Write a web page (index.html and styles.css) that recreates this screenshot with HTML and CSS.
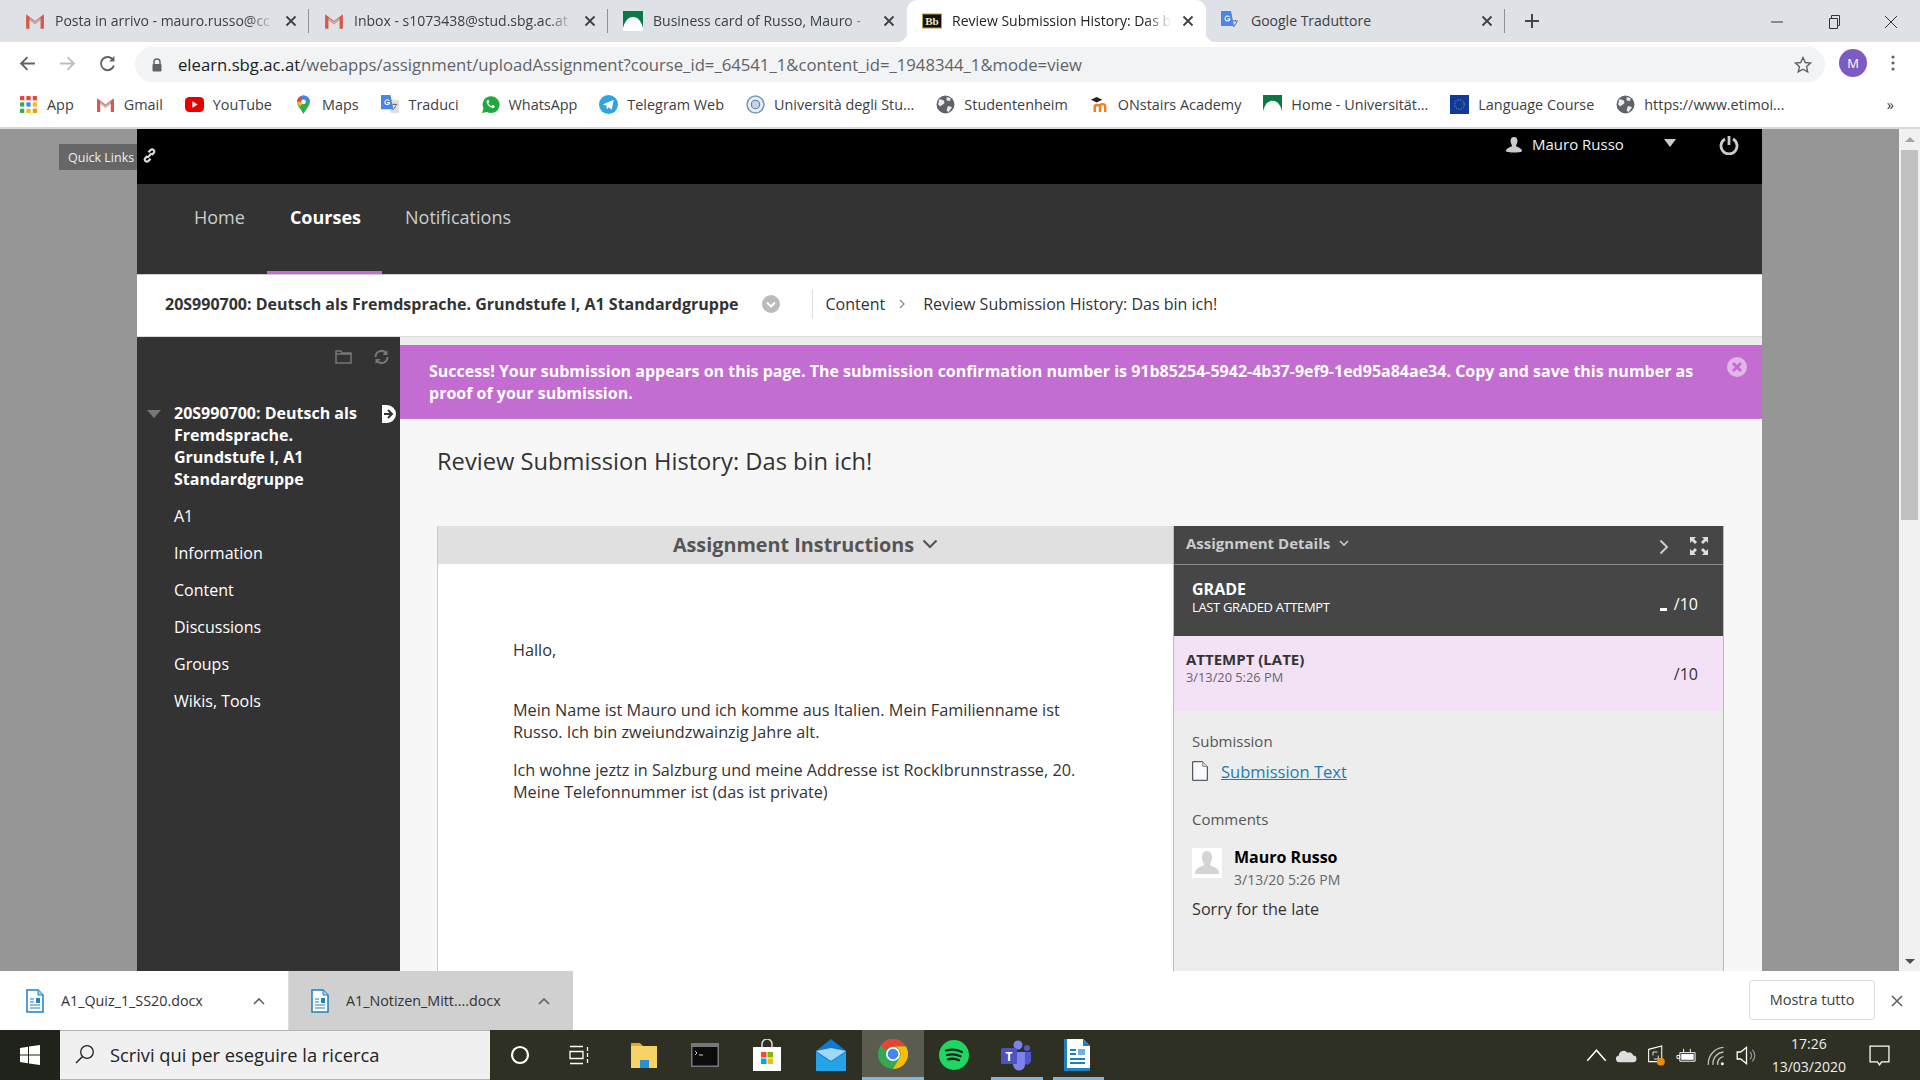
FILE: index.html
```html
<!DOCTYPE html>
<html lang="it">
<head>
<meta charset="utf-8">
<title>Review Submission History</title>
<link rel="stylesheet" href="styles.css">
</head>
<body>
<svg class="defs" width="0" height="0" aria-hidden="true">
  <symbol id="gm" viewBox="0 0 18 18"><path d="M1 16V3l8 6 8-6v13h-3V8l-5 4-5-4v8z" fill="#d8574a"/><path d="M4 8l5 4 5-4V6L9 9.600 4 6z" fill="#bbb5b0"/></symbol>
  <symbol id="uni" viewBox="0 0 20 20"><rect width="20" height="20" fill="#0a7a45"/><path d="M0 20V17C2 9 6 6 10 6s8 3 10 11v3z" fill="#fff"/></symbol>
  <symbol id="gt" viewBox="0 0 20 20"><path d="M9 5h10v14H10z" fill="#dfe1e5"/><path d="M0 0h10l3 15H0z" fill="#4a84ee"/><path d="M8.500 6A2.500 2.500 0 1 0 9 8H6.500" fill="none" stroke="#fff" stroke-width="1.100"/><path d="M12 10h5M14.500 9v1M12.500 16l3.500-5" stroke="#666" stroke-width="1" fill="none"/></symbol>
  <symbol id="globe" viewBox="0 0 18 18"><circle cx="9" cy="9" r="8.500" fill="#5f6368"/><path d="M3 4c3 0 5 1 5 3S5 9 4 11L2 9zM11 11c2-1 4 0 4 1l-3 4-2-1zM10 2l4 1-1 3-3-1z" fill="#e8eaed"/></symbol>
  <symbol id="odt" viewBox="0 0 18 24"><path d="M1 1h11l5 5v17H1z" fill="#fff" stroke="#1c80c4" stroke-width="1.500"/><path d="M12 1v5h5" fill="#aed0e8" stroke="#1c80c4"/><path d="M4 10h4M4 13h4M4 16h10M4 19h10" stroke="#1c80c4" stroke-width="1.200"/><rect x="10" y="9" width="4" height="5" fill="#1c80c4"/></symbol>
  <symbol id="close" viewBox="0 0 12 12"><path d="M1.500 1.500l9 9M10.500 1.500l-9 9" stroke="#3c4043" stroke-width="1.800"/></symbol>
</svg>

<header class="tabstrip">
  <div class="tab">
    <svg class="fav"><use href="#gm"/></svg><span class="tab-title">Posta in arrivo - mauro.russo@cc</span><svg class="tab-x"><use href="#close"/></svg>
  </div>
  <div class="tab sep">
    <svg class="fav"><use href="#gm"/></svg><span class="tab-title">Inbox - s1073438@stud.sbg.ac.at</span><svg class="tab-x"><use href="#close"/></svg>
  </div>
  <div class="tab sep">
    <svg class="fav"><use href="#uni"/></svg><span class="tab-title">Business card of Russo, Mauro -</span><svg class="tab-x"><use href="#close"/></svg>
  </div>
  <div class="tab active">
    <svg class="fav" viewBox="0 0 20 20"><rect x=".500" y="3" width="19" height="14" fill="#111" stroke="#b8993e"/><text x="10" y="14" class="bb">Bb</text></svg><span class="tab-title">Review Submission History: Das b</span><svg class="tab-x"><use href="#close"/></svg>
  </div>
  <div class="tab tab-last">
    <svg class="fav"><use href="#gt"/></svg><span class="tab-title">Google Traduttore</span><svg class="tab-x"><use href="#close"/></svg>
  </div>
  <div class="new-tab">
    <svg width="14" height="14" viewBox="0 0 14 14"><path d="M7 0v14M0 7h14" stroke="#444" stroke-width="2"/></svg>
  </div>
  <div class="win-controls">
    <svg width="14" height="14" viewBox="0 0 14 14"><path d="M1 7h12" stroke="#333"/></svg>
    <svg width="14" height="14" viewBox="0 0 14 14"><path d="M2.500 3.500h8v10h-8zM4.500 3.500v-3h8v10h-2" fill="none" stroke="#333"/></svg>
    <svg width="14" height="14" viewBox="0 0 14 14"><path d="M1 1l12 12M13 1L1 13" stroke="#333"/></svg>
  </div>
</header>

<nav class="toolbar">
  <svg class="tool" viewBox="0 0 16 16"><path d="M15 8H2M8 2 2 8l6 6" fill="none" stroke="#5f6368" stroke-width="1.800"/></svg>
  <svg class="tool" viewBox="0 0 16 16"><path d="M1 8h13M8 2l6 6-6 6" fill="none" stroke="#bcbfc3" stroke-width="1.800"/></svg>
  <svg class="tool" viewBox="0 0 16 16"><path d="M13.500 5A6.200 6.200 0 1 0 14 10" fill="none" stroke="#5f6368" stroke-width="1.800"/><path d="M14.500 1v5h-5z" fill="#5f6368"/></svg>
  <div class="omnibox">
    <svg class="lock" viewBox="0 0 12 14"><path d="M3 6V4a3 3 0 0 1 6 0v2" fill="none" stroke="#5f6368" stroke-width="1.400"/><rect x="1.500" y="6" width="9" height="7.500" rx="1" fill="#5f6368"/></svg>
    <span class="url"><b class="host">elearn.sbg.ac.at</b>/webapps/assignment/uploadAssignment?course_id=_64541_1&amp;content_id=_1948344_1&amp;mode=view</span>
    <svg class="star" viewBox="0 0 18 18"><path d="M9 1.500l2.300 5 5.200.6-3.900 3.500 1.100 5.300L9 13.200l-4.700 2.700 1.100-5.300L1.500 7.100l5.200-.6z" fill="none" stroke="#5f6368" stroke-width="1.400"/></svg>
  </div>
  <div class="avatar">M</div>
  <svg class="kebab" viewBox="0 0 4 16"><circle cx="2" cy="2" r="1.600"/><circle cx="2" cy="8" r="1.600"/><circle cx="2" cy="14" r="1.600"/></svg>
</nav>

<nav class="bookmarks">
  <a class="bm bm-app"><svg class="bm-i" viewBox="0 0 18 18"><g><rect x="1" y="1" width="4" height="4" fill="#ea4335"/><rect x="7" y="1" width="4" height="4" fill="#ea4335"/><rect x="13" y="1" width="4" height="4" fill="#ea4335"/><rect x="1" y="7" width="4" height="4" fill="#34a853"/><rect x="7" y="7" width="4" height="4" fill="#4285f4"/><rect x="13" y="7" width="4" height="4" fill="#fbbc05"/><rect x="1" y="13" width="4" height="4" fill="#34a853"/><rect x="7" y="13" width="4" height="4" fill="#fbbc05"/><rect x="13" y="13" width="4" height="4" fill="#f29900"/></g></svg>App</a>
  <a class="bm"><svg class="bm-i"><use href="#gm"/></svg>Gmail</a>
  <a class="bm"><svg class="bm-i" viewBox="0 0 18 18"><rect y="2" width="18" height="14" rx="4" fill="#e60000"/><path d="M7 6l5 3-5 3z" fill="#fff"/></svg>YouTube</a>
  <a class="bm"><svg class="bm-i" viewBox="0 0 18 18"><path d="M9 18C6 13 3 10 3 6.500a6 6 0 0 1 12 0C15 10 12 13 9 18z" fill="#34a853"/><path d="M3 6.500a6 6 0 0 1 3-5.200l3 5.200z" fill="#ea4335"/><path d="M6 1.300a6 6 0 0 1 9 5.200H9z" fill="#4285f4"/><path d="M3 6.500h6L6 11C4 9 3 8 3 6.500z" fill="#fbbc05"/><circle cx="9" cy="6.500" r="2.200" fill="#fff"/></svg>Maps</a>
  <a class="bm"><svg class="bm-i"><use href="#gt"/></svg>Traduci</a>
  <a class="bm"><svg class="bm-i" viewBox="0 0 18 18"><path d="M1 17l1.300-4.500A8 8 0 1 1 5.500 16z" fill="#1faa3d"/><path d="M6 5c-1 1-1 3 1 5s4 3 5.500 2l.5-1.500-2-1-1 1c-1 0-3-2-3-3l1-1-1-2z" fill="#fff"/></svg>WhatsApp</a>
  <a class="bm"><svg class="bm-i" viewBox="0 0 18 18"><circle cx="9" cy="9" r="9" fill="#2ca5e0"/><path d="M3.500 9 14 4.500 12 14l-3-2.300-1.500 2-.5-3.700z" fill="#fff"/></svg>Telegram Web</a>
  <a class="bm"><svg class="bm-i" viewBox="0 0 18 18"><circle cx="9" cy="9" r="8" fill="#e6edf5" stroke="#7c98bd" stroke-width="1.500"/><circle cx="9" cy="9" r="4" fill="#c5d3e4" stroke="#5b7ba6"/></svg>Università degli Stu...</a>
  <a class="bm"><svg class="bm-i"><use href="#globe"/></svg>Studentenheim</a>
  <a class="bm"><svg class="bm-i" viewBox="0 0 20 18"><path d="M1 4l6-3 6 3-6 3z" fill="#222"/><path d="M5 17V10M10.500 17V10M16 17v-6c0-3-5.500-3-5.500-1M5 11c0-2 5.500-2 5.500 0" fill="none" stroke="#f0801e" stroke-width="2.600"/></svg>ONstairs Academy</a>
  <a class="bm"><svg class="bm-i"><use href="#uni"/></svg>Home - Universität...</a>
  <a class="bm"><svg class="bm-i" viewBox="0 0 20 20"><rect width="20" height="20" fill="#0d3a9c"/><circle cx="10" cy="10" r="5" fill="none" stroke="#d9c52a" stroke-dasharray="1 1.600"/></svg>Language Course</a>
  <a class="bm"><svg class="bm-i"><use href="#globe"/></svg>https://www.etimoi...</a>
  <span class="bm-more">»</span>
</nav>

<main class="page">
  <div class="gutter-left">
    <div class="quick"><span>Quick Links</span><svg class="quick-i" viewBox="0 0 14 14"><path d="M5 7.500 3 9.500a2 2 0 0 0 2.800 2.800L8 10M9 6.500l2-2A2 2 0 0 0 8.200 1.700L6 4M5 9l4-4" fill="none" stroke="#ddd" stroke-width="2"/></svg></div>
  </div>
  <div class="frame">
    <div class="topbar">
      <svg class="tb-user" viewBox="0 0 18 18"><path d="M9 1c2.500 0 3.500 2 3.500 4S11 9 11 10c0 1 6 1.500 6 5 0 2-16 2-16 0 0-3.500 6-4 6-5 0-1-1.500-3-1.500-5S6.500 1 9 1z" fill="#ccc"/></svg>
      <span class="tb-name">Mauro Russo</span>
      <span class="tb-tri"></span>
      <svg class="tb-power" viewBox="0 0 20 20"><path d="M6 4a8 8 0 1 0 8 0" fill="none" stroke="#ccc" stroke-width="2.800"/><path d="M10 1v9" stroke="#ccc" stroke-width="2.800"/></svg>
    </div>
    <div class="mainnav">
      <a class="nav-item">Home</a>
      <a class="nav-item current">Courses</a>
      <a class="nav-item">Notifications</a>
    </div>
    <div class="crumbs">
      <span class="crumb-course">20S990700: Deutsch als Fremdsprache. Grundstufe I, A1 Standardgruppe</span>
      <svg class="crumb-down" viewBox="0 0 18 18"><circle cx="9" cy="9" r="9" fill="#bbb"/><path d="M5 7.500l4 4 4-4" fill="none" stroke="#fff" stroke-width="2"/></svg>
      <span class="crumb-div"></span>
      <span class="crumb-item">Content</span>
      <svg class="crumb-sep" viewBox="0 0 6 10"><path d="M1 1l4 4-4 4" fill="none" stroke="#888" stroke-width="1.200"/></svg>
      <span class="crumb-item">Review Submission History: Das bin ich!</span>
    </div>
    <div class="body-row">
      <aside class="sidebar">
        <div class="side-tools">
          <svg class="side-t" viewBox="0 0 17 16"><path d="M1 14V2h5l1 2h9v10zM1 5h15" fill="none" stroke="#777" stroke-width="1.500"/></svg>
          <svg class="side-t" viewBox="0 0 16 16"><path d="M2 8a6 6 0 0 1 10.500-4M14 8a6 6 0 0 1-10.500 4" fill="none" stroke="#777" stroke-width="2"/><path d="M14 1v5H9zM2 15v-5h5z" fill="#777"/></svg>
        </div>
        <div class="side-course">
          <span class="side-tri"></span>
          <span class="side-title">20S990700: Deutsch als Fremdsprache. Grundstufe I, A1 Standardgruppe</span>
          <svg class="side-go" viewBox="0 0 14 18"><path d="M0 0h5a9 9 0 0 1 0 18H0z" fill="#fff"/><path d="M2 9h7M6 5l4 4-4 4" fill="none" stroke="#333" stroke-width="2"/></svg>
        </div>
        <ul class="side-list">
          <li>A1</li>
          <li>Information</li>
          <li>Content</li>
          <li>Discussions</li>
          <li>Groups</li>
          <li>Wikis, Tools</li>
        </ul>
      </aside>
      <section class="content">
        <div class="strip"></div>
        <div class="banner">
          <p>Success! Your submission appears on this page. The submission confirmation number is 91b85254-5942-4b37-9ef9-1ed95a84ae34. Copy and save this number as proof of your submission.</p>
          <svg class="banner-x" viewBox="0 0 20 20"><circle cx="10" cy="10" r="10" fill="#e3b6ea"/><path d="M6 6l8 8M14 6l-8 8" stroke="#c36dd2" stroke-width="3"/></svg>
        </div>
        <h1 class="page-title">Review Submission History: Das bin ich!</h1>
        <div class="panels">
          <div class="instr">
            <div class="instr-head">Assignment Instructions<svg class="instr-chev" viewBox="0 0 16 10"><path d="M1.500 1.500 8 8l6.500-6.500" fill="none" stroke="#555" stroke-width="2.200"/></svg></div>
            <div class="instr-body">
              <p class="hallo">Hallo,</p>
              <p class="para">Mein Name ist Mauro und ich komme aus Italien. Mein Familienname ist Russo. Ich bin zweiundzwainzig Jahre alt.</p>
              <p class="para">Ich wohne jeztz in Salzburg und meine Addresse ist Rocklbrunnstrasse, 20. Meine Telefonnummer ist (das ist private)</p>
            </div>
          </div>
          <div class="details">
            <div class="det-head">
              <span class="det-title">Assignment Details</span>
              <svg class="det-chev" viewBox="0 0 10 7"><path d="M1 1l4 4 4-4" fill="none" stroke="#ccc" stroke-width="1.600"/></svg>
              <svg class="det-next" viewBox="0 0 10 16"><path d="M1.500 1.500 8 8l-6.500 6.500" fill="none" stroke="#ccc" stroke-width="2"/></svg>
              <svg class="det-exp" viewBox="0 0 20 20"><path d="M1 1h6L5 3l3 3-2 2-3-3-2 2zM19 1v6l-2-2-3 3-2-2 3-3-2-2zM1 19v-6l2 2 3-3 2 2-3 3 2 2zM19 19h-6l2-2-3-3 2-2 3 3 2-2z" fill="#ddd"/></svg>
            </div>
            <div class="grade">
              <div><div class="grade-t">GRADE</div><div class="grade-s">LAST GRADED ATTEMPT</div></div>
              <div class="grade-v"><span class="grade-dash"></span>/10</div>
            </div>
            <div class="attempt">
              <div><div class="att-t">ATTEMPT (LATE)</div><div class="att-d">3/13/20 5:26 PM</div></div>
              <div class="att-v">/10</div>
            </div>
            <div class="det-body">
              <div class="lbl">Submission</div>
              <div class="sub-link">
                <svg class="sub-i" viewBox="0 0 16 20"><path d="M.700.700h10l4.600 4.600v14H.700z" fill="#f8fbfb" stroke="#334"/><path d="M10.700.700v4.600h4.600" fill="#d5e5e5" stroke="#889"/></svg>
                <a class="link">Submission Text</a>
              </div>
              <div class="lbl lbl-c">Comments</div>
              <div class="comment">
                <svg class="cm-av" viewBox="0 0 30 30"><rect width="30" height="30" fill="#fff"/><path d="M15 3c3.500 0 5 3 5 6.500S18 15 18 17c0 1 8 2 9 7v2H3v-2c1-5 9-6 9-7 0-2-2-4-2-7.500S11.500 3 15 3z" fill="#d4d4d4"/></svg>
                <div><div class="cm-name">Mauro Russo</div><div class="cm-date">3/13/20 5:26 PM</div></div>
              </div>
              <div class="cm-text">Sorry for the late</div>
            </div>
          </div>
        </div>
      </section>
    </div>
  </div>
  <div class="gutter-right"></div>
  <div class="scrollbar">
    <span class="sb-up"></span>
    <span class="sb-thumb"></span>
    <span class="sb-down"></span>
  </div>
</main>

<div class="downloads">
  <div class="dl">
    <svg class="dl-i"><use href="#odt"/></svg><span class="dl-name">A1_Quiz_1_SS20.docx</span>
    <svg class="dl-c" viewBox="0 0 12 8"><path d="M1 7l5-5 5 5" fill="none" stroke="#5f6368" stroke-width="1.600"/></svg>
  </div>
  <div class="dl dl-on">
    <svg class="dl-i"><use href="#odt"/></svg><span class="dl-name">A1_Notizen_Mitt....docx</span>
    <svg class="dl-c" viewBox="0 0 12 8"><path d="M1 7l5-5 5 5" fill="none" stroke="#5f6368" stroke-width="1.600"/></svg>
  </div>
  <div class="dl-fill"></div>
  <button class="show-all">Mostra tutto</button>
  <svg class="dl-x" viewBox="0 0 12 12"><path d="M1 1l10 10M11 1 1 11" stroke="#5f6368" stroke-width="1.600"/></svg>
</div>

<footer class="taskbar">
  <div class="start"><svg width="20" height="20" viewBox="0 0 20 20"><path d="M0 3l8-1.200V9.500H0zM9 1.600 20 0v9.500H9zM0 10.500h8v7.700L0 17zM9 10.500h11V20L9 18.400z" fill="#fff"/></svg></div>
  <div class="search">
    <svg class="search-i" viewBox="0 0 20 20"><circle cx="12" cy="8" r="6.300" fill="none" stroke="#222" stroke-width="1.300"/><path d="M7.500 12.500 1 19" stroke="#222" stroke-width="1.500"/></svg>
    <span>Scrivi qui per eseguire la ricerca</span>
  </div>
  <div class="task task-cortana"><svg width="20" height="20" viewBox="0 0 20 20"><circle cx="10" cy="10" r="8" fill="none" stroke="#fff" stroke-width="2.200"/></svg></div>
  <div class="task task-view"><svg width="22" height="20" viewBox="0 0 22 20"><path d="M1 1.500h13M1 18.500h13M1 6.500h13v7H1zM18.500 2v4M18.500 8v4M18.500 14v4" fill="none" stroke="#fff" stroke-width="1.300"/></svg></div>
  <div class="task"><svg width="28" height="26" viewBox="0 0 28 26"><path d="M1 1h9l3 3v3H1z" fill="#e5a823"/><rect x="1" y="4" width="26" height="22" fill="#f7d366"/><path d="M10 26v-8h9v8z" fill="#2b8fd6"/></svg></div>
  <div class="task"><svg width="28" height="24" viewBox="0 0 28 24"><rect width="28" height="24" fill="#777"/><rect x="1.500" y="4" width="25" height="18.500" fill="#0c0c0c"/><path d="M4 8l2 2-2 2M8 12h4" stroke="#ccc" fill="none"/></svg></div>
  <div class="task"><svg width="28" height="32" viewBox="0 0 28 32"><path d="M9 8V5a5 5 0 0 1 10 0v3" fill="none" stroke="#ddd" stroke-width="1.500"/><rect y="8" width="28" height="24" fill="#fff"/><rect x="8" y="13" width="5.500" height="5.500" fill="#f25022"/><rect x="14.500" y="13" width="5.500" height="5.500" fill="#7fba00"/><rect x="8" y="19.500" width="5.500" height="5.500" fill="#00a4ef"/><rect x="14.500" y="19.500" width="5.500" height="5.500" fill="#ffb900"/></svg></div>
  <div class="task task-mail"><svg width="30" height="32" viewBox="0 0 30 32"><path d="M0 12 15 0l15 12v20H0z" fill="#0f78d4"/><path d="M0 12l15 10 15-10-15-3z" fill="#9fd8f7"/><path d="M0 32V13l15 10 15-10v19z" fill="#27a3e8"/></svg></div>
  <div class="task task-on"><svg width="30" height="30" viewBox="0 0 30 30"><circle cx="15" cy="15" r="15" fill="#34a853"/><path d="M15 0a15 15 0 0 1 13 7.500H15a7.500 7.500 0 0 0-6.500 3.700L2.500 7A15 15 0 0 1 15 0z" fill="#ea4335"/><path d="M28 7.500A15 15 0 0 1 15 30l6.500-11.200A7.500 7.500 0 0 0 15 7.500z" fill="#fbbc05"/><circle cx="15" cy="15" r="7" fill="#fff"/><circle cx="15" cy="15" r="5.300" fill="#4285f4"/></svg></div>
  <div class="task"><svg width="30" height="30" viewBox="0 0 30 30"><circle cx="15" cy="15" r="15" fill="#1ed760"/><path d="M7 10.500c6-1.500 11-1 16 1.500M8 15c5-1.200 9-.8 13.500 1.300M9 19.300c4-1 7.500-.7 11 1" fill="none" stroke="#222" stroke-width="2.300" stroke-linecap="round"/></svg></div>
  <div class="task task-run"><svg width="32" height="32" viewBox="0 0 32 32"><circle cx="18" cy="6" r="4.500" fill="#7b83eb"/><circle cx="27" cy="9" r="3" fill="#5059c9"/><path d="M22 13h9v9a4 4 0 0 1-6 3z" fill="#5059c9"/><path d="M11 13h14v12a6 6 0 0 1-12 1z" fill="#7b83eb"/><rect x="1" y="9" width="16" height="16" rx="1.500" fill="#4b53bc"/><text x="9" y="22" class="teams-t">T</text></svg></div>
  <div class="task task-run"><svg width="26" height="32" viewBox="0 0 26 32"><path d="M0 0h19l7 7v25H0z" fill="#fff"/><path d="M19 0l7 7h-7z" fill="#1c80c4"/><path d="M0 0h3v32H0zM0 29h26v3H0z" fill="#1c80c4"/><path d="M6 10h6v2H6zM6 14h6v2H6zM6 19h15v2H6zM6 23h15v2H6z" fill="#1c80c4"/><rect x="14" y="10" width="7" height="6" fill="#6eb1dd"/></svg></div>
  <div class="tray">
    <svg class="tr" viewBox="0 0 16 16"><path d="M1 12l7-8 7 8" fill="none" stroke="#fff" stroke-width="1.200"/></svg>
    <svg class="tr" viewBox="0 0 22 16"><path d="M4 15a3.500 3.500 0 0 1-1-7 5 5 0 0 1 9-3 4.500 4.500 0 0 1 6 3 3.500 3.500 0 0 1 0 7z" fill="#ddd"/></svg>
    <svg class="tr" viewBox="0 0 22 24"><path d="M2 5l15-4v18H2z" fill="none" stroke="#fff" stroke-width="1.200"/><path d="M12 8H7v4M8 16h5v-4" fill="none" stroke="#fff"/><circle cx="16" cy="19" r="4.500" fill="#f08a00"/></svg>
    <svg class="tr" viewBox="0 0 22 16"><path d="M4 5h16v9H4zM1 8h3v3H1z" fill="none" stroke="#fff"/><rect x="5.500" y="6.500" width="13" height="6" fill="#fff"/><path d="M8 1v4M15 1v4" stroke="#fff"/></svg>
    <svg class="tr" viewBox="0 0 18 18"><path d="M2 17a14 14 0 0 1 13-15M6 17a10 10 0 0 1 9-11M10 17a6 6 0 0 1 5-7" fill="none" stroke="#bbb" stroke-width="1.200"/><circle cx="14" cy="16" r="1.300" fill="#fff"/></svg>
    <svg class="tr" viewBox="0 0 18 18"><path d="M1 6h3l5-4v14l-5-4H1z" fill="none" stroke="#fff" stroke-width="1.100"/><path d="M12 6a4 4 0 0 1 0 6M14 4a7 7 0 0 1 0 10" fill="none" stroke="#999"/></svg>
    <div class="clock"><div>17:26</div><div>13/03/2020</div></div>
    <svg class="notif" viewBox="0 0 20 20"><path d="M1 1h18v15h-7l-2 3-2-3H1z" fill="none" stroke="#fff" stroke-width="1.200"/></svg>
  </div>
</footer>
</body>
</html>
```

FILE: styles.css
```css
* { box-sizing: border-box; }
html, body { margin: 0; height: 100%; overflow: hidden; }
body {
  display: flex;
  flex-direction: column;
  width: 1920px;
  height: 1080px;
  font-family: "Open Sans", "Liberation Sans", sans-serif;
  color: #333;
  background: #fff;
}
.defs { position: absolute; }
p { margin: 0; }

/* Browser tabs */
.tabstrip {
  height: 42px;
  flex: none;
  display: flex;
  align-items: flex-end;
  background: #dee1e6;
  padding-left: 10px;
}
.tab {
  width: 299px;
  height: 42px;
  display: flex;
  align-items: center;
  padding: 0 12px 0 15px;
  font-size: 14px;
  color: #3c4043;
  flex: none;
  position: relative;
}
.tab.sep::before {
  content: "";
  position: absolute;
  left: -1px;
  top: 9px;
  height: 24px;
  width: 1px;
  background: #8d9096;
}
.tab.active { background: #fff; border-radius: 10px 10px 0 0; color: #222; }
.tab.active::before, .tab.active::after {
  content: "";
  position: absolute;
  bottom: 0;
  width: 10px;
  height: 10px;
}
.tab.active::before { left: -10px; background: radial-gradient(circle at 0 0, transparent 10px, #fff 10.500px); }
.tab.active::after { right: -10px; background: radial-gradient(circle at 100% 0, transparent 10px, #fff 10.500px); }
.tab-last::after {
  content: "";
  position: absolute;
  right: 0;
  top: 9px;
  height: 24px;
  width: 1px;
  background: #8d9096;
}
.fav { width: 20px; height: 20px; flex: none; margin-right: 10px; }
.bb { font: bold 11px "Liberation Serif", serif; fill: #f0e6c0; text-anchor: middle; }
.tab-title {
  flex: 1;
  min-width: 0;
  overflow: hidden;
  white-space: nowrap;
  line-height: 20px;
  margin-top: -1px;
  -webkit-mask-image: linear-gradient(90deg, #000 88%, transparent);
  mask-image: linear-gradient(90deg, #000 88%, transparent);
}
.tab-last .tab-title { -webkit-mask-image: none; mask-image: none; }
.tab-x { width: 12px; height: 12px; margin-left: 10px; flex: none; }
.new-tab { height: 42px; display: flex; align-items: center; padding-left: 20px; }
.win-controls { margin-left: auto; display: flex; gap: 43px; padding-right: 22px; height: 40px; align-items: center; }

/* Toolbar */
.toolbar {
  height: 42px;
  flex: none;
  display: flex;
  align-items: center;
  background: #fff;
  padding-left: 19px;
}
.tool { width: 17px; height: 17px; margin-right: 23px; flex: none; }
.tool:nth-child(3) { margin-right: 19px; }
.omnibox {
  width: 1690px;
  height: 35px;
  margin-top: 3px;
  border-radius: 18px;
  background: #f1f3f4;
  display: flex;
  align-items: center;
  padding: 0 13px 0 16px;
  font-size: 16.700px;
  color: #5f6368;
}
.lock { width: 12px; height: 14px; flex: none; margin-right: 15px; }
.url { flex: 1; white-space: nowrap; }
.host { font-weight: 400; color: #202124; }
.star { width: 18px; height: 18px; flex: none; }
.avatar {
  width: 28px;
  height: 28px;
  margin-left: 14px;
  border-radius: 50%;
  background: #7c5cc4;
  color: #fff;
  font-size: 13px;
  display: flex;
  align-items: center;
  justify-content: center;
  flex: none;
}
.kebab { width: 4px; height: 16px; margin-left: 24px; fill: #5f6368; flex: none; }

/* Bookmarks */
.bookmarks {
  height: 45px;
  flex: none;
  display: flex;
  align-items: center;
  padding: 0 26px 2px 19px;
  gap: 22px;
  font-size: 14.400px;
  color: #3c4043;
  background: #fff;
  border-bottom: 2px solid #d8d8de;
  white-space: nowrap;
}
.bm { display: flex; align-items: center; gap: 9px; }
.bm-i { width: 19px; height: 19px; flex: none; }
.bm-more { margin-left: auto; }

/* LMS page */
.page { flex: 1; min-height: 0; display: flex; background: #969696; }
.gutter-left { width: 137px; flex: none; position: relative; }
.quick {
  position: absolute;
  left: 59px;
  top: 15px;
  width: 78px;
  height: 26px;
  background: #666;
  color: #eee;
  font-size: 12.500px;
  display: flex;
  align-items: center;
  padding-left: 9px;
  white-space: nowrap;
  z-index: 2;
}
.quick-i { position: absolute; left: 83px; top: 4px; width: 15px; height: 15px; }
.frame { width: 1625px; flex: none; display: flex; flex-direction: column; min-height: 0; }
.gutter-right { flex: 1; }
.topbar {
  height: 55px;
  flex: none;
  background: #000;
  display: flex;
  align-items: flex-start;
  padding: 6px 0 0 1368px;
  color: #ddd;
  font-size: 15px;
}
.tb-user { width: 18px; height: 18px; margin: 0 9px 0 0; flex: none; position: relative; top: 1px; }
.tb-name { line-height: 18px; width: 132px; color: #eaf2fa; flex: none; }
.tb-tri { width: 0; height: 0; margin-top: 4px; border: 6px solid transparent; border-top: 8px solid #ccc; border-bottom: 0; flex: none; }
.tb-power { width: 20px; height: 20px; margin-left: 43px; flex: none; }
.mainnav {
  height: 91px;
  flex: none;
  display: flex;
  background: #333;
  border-bottom: 1px solid #ccc;
  padding-left: 35px;
  font-size: 18px;
  color: #ccc;
}
.nav-item { padding: 21px 22px 0; }
.nav-item.current {
  margin-right: 1px;
  padding-left: 23px;
  padding-right: 21px;
  font-weight: 700;
  color: #fff;
  border-bottom: 3px solid #c36dd2;
}
.crumbs {
  height: 62px;
  flex: none;
  display: flex;
  align-items: center;
  background: #fff;
  padding: 0 0 4px 28px;
  font-size: 16px;
  color: #333;
  border-bottom: 1px solid #ddd;
  white-space: nowrap;
}
.crumb-course { font-weight: 700; }
.crumb-down { width: 18px; height: 18px; margin-left: 24px; }
.crumb-div { width: 1px; height: 30px; background: #ddd; margin: 0 12px 0 32px; }
.crumb-sep { width: 6px; height: 10px; margin: 0 18px 0 14px; }
.body-row { flex: 1; min-height: 0; display: flex; }

/* Sidebar */
.sidebar { width: 263px; flex: none; background: #333; color: #fff; }
.side-tools { display: flex; justify-content: flex-end; gap: 21px; padding: 12px 10px 0 0; height: 65px; }
.side-t { width: 17px; height: 16px; }
.side-course { display: flex; align-items: flex-start; font-weight: 700; font-size: 16px; line-height: 22px; padding-left: 10px; }
.side-tri { width: 0; height: 0; margin-top: 8px; border: 7px solid transparent; border-top: 8px solid #777; border-bottom: 0; flex: none; }
.side-title { width: 190px; margin-left: 13px; flex: none; }
.side-go { width: 14px; height: 18px; margin: 3px 0 0 18px; flex: none; }
.side-list { list-style: none; margin: 8px 0 0; padding: 0 0 0 37px; font-size: 16px; }
.side-list li { height: 37px; line-height: 37px; }

/* Content */
.content { flex: 1; min-width: 0; background: #f7f7f7; overflow: hidden; }
.strip { height: 8px; background: #ececec; }
.banner {
  height: 74px;
  background: #c36dd2;
  color: #fff;
  font-weight: 700;
  font-size: 16px;
  line-height: 22px;
  padding: 15px 66px 0 29px;
  position: relative;
}
.banner-x { position: absolute; top: 12px; right: 15px; width: 20px; height: 20px; }
.page-title { margin: 25px 0 0 37px; font-size: 23.700px; font-weight: 400; line-height: 34px; color: #333; }
.panels { display: flex; margin: 48px 38px 0 37px; align-items: stretch; height: 600px; }
.instr { width: 736px; flex: none; background: #fff; border-left: 1px solid #ccc; }
.instr-head {
  height: 38px;
  padding-bottom: 2px;
  background: #e0e0e0;
  display: flex;
  align-items: center;
  justify-content: center;
  gap: 8px;
  font-size: 19.800px;
  font-weight: 700;
  color: #555;
}
.instr-chev { width: 16px; height: 10px; }
.instr-body { padding: 75px 80px 0 75px; font-size: 16.250px; line-height: 22px; color: #333; }
.hallo { margin-bottom: 38px; }
.para { margin-bottom: 16px; }

/* Details */
.details { flex: 1; background: #ededed; border-left: 1px solid #bbb; border-right: 1px solid #bbb; }
.det-head {
  height: 39px;
  background: #464646;
  display: flex;
  align-items: center;
  padding-left: 12px;
  border-bottom: 1px solid #888;
  color: #ccc;
  font-size: 15px;
  font-weight: 700;
}
.det-title { line-height: 34px; align-self: flex-start; }
.det-chev { width: 10px; height: 7px; margin: 0 0 4px 9px; }
.det-next { width: 10px; height: 16px; margin: 4px 0 0 auto; }
.det-exp { width: 20px; height: 20px; margin: 2px 14px 0 20px; }
.grade {
  height: 71px;
  background: #464646;
  color: #fff;
  display: flex;
  justify-content: space-between;
  padding: 13px 25px 0 18px;
}
.grade-t { font-size: 16px; font-weight: 700; line-height: 22px; }
.grade-s { font-size: 13px; line-height: 14px; letter-spacing: -.35px; }
.grade-v { font-size: 16px; line-height: 22px; padding-top: 11px; display: flex; align-items: flex-end; height: 37px; }
.grade-dash { width: 7px; height: 3px; background: #fff; margin: 0 7px 4px 0; }
.attempt {
  height: 75px;
  background: #f3e2f6;
  display: flex;
  justify-content: space-between;
  padding: 13px 25px 0 12px;
}
.att-t { font-size: 15px; font-weight: 700; line-height: 20px; }
.att-d { font-size: 12.800px; line-height: 16px; color: #666; }
.att-v { font-size: 16px; padding-top: 14px; line-height: 22px; }
.det-body { padding: 19px 18px 0; font-size: 15px; color: #555; }
.lbl { line-height: 22px; }
.lbl-c { margin-top: 26px; }
.sub-link { display: flex; align-items: center; margin-top: 8px; height: 22px; }
.sub-i { width: 16px; height: 20px; margin-right: 13px; flex: none; }
.link { font-size: 16.500px; color: #1c7db0; text-decoration: underline; }
.comment { display: flex; margin-top: 18px; gap: 12px; }
.cm-av { width: 30px; height: 30px; flex: none; }
.cm-name { font-size: 16px; font-weight: 700; color: #000; line-height: 20px; margin-top: -1px; }
.cm-date { font-size: 14px; color: #666; line-height: 22px; margin-top: 2px; }
.cm-text { font-size: 16.200px; color: #333; margin-top: 7px; line-height: 22px; }

/* Scrollbar */
.scrollbar { width: 21px; flex: none; background: #f1f1f1; display: flex; flex-direction: column; align-items: center; position: relative; }
.sb-up { width: 0; height: 0; margin-top: 8px; border: 5px solid transparent; border-bottom: 5px solid #a3a3a3; border-top: 0; }
.sb-thumb { width: 17px; height: 370px; background: #c1c1c1; margin-top: 8px; }
.sb-down { width: 0; height: 0; margin-top: auto; margin-bottom: 7px; border: 5px solid transparent; border-top: 5px solid #505050; border-bottom: 0; }

/* Downloads */
.downloads {
  height: 59px;
  flex: none;
  display: flex;
  align-items: center;
  background: #fff;
}
.dl { width: 288px; height: 59px; display: flex; align-items: center; padding-left: 26px; font-size: 14.300px; color: #333; flex: none; }
.dl-on { width: 285px; background: #d0d0d0; border-left: 1px solid #ddd; padding-left: 22px; }
.dl-i { width: 18px; height: 24px; flex: none; margin-right: 17px; }
.dl-name { width: 192px; flex: none; white-space: nowrap; }
.dl-c { width: 12px; height: 8px; flex: none; }
.dl-fill { flex: 1; }
.show-all {
  width: 126px;
  height: 40px;
  margin-top: -1px;
  padding-bottom: 3px;
  background: #fff;
  border: 1px solid #dadce0;
  border-radius: 4px;
  font: 14.500px "Open Sans", sans-serif;
  color: #3c4043;
}
.dl-x { width: 12px; height: 12px; margin: 0 17px 0 16px; flex: none; }

/* Taskbar */
.taskbar { height: 50px; flex: none; display: flex; align-items: center; background: #2d3023; color: #fff; }
.start { width: 60px; height: 50px; background: #20231b; display: flex; align-items: center; justify-content: center; flex: none; }
.search {
  width: 430px;
  height: 50px;
  flex: none;
  background: #f0f0f0;
  border: 1px solid #b5b5b5;
  border-width: 1px 0;
  display: flex;
  align-items: center;
  color: #222;
  font-size: 18.300px;
  padding: 0 0 2px 15px;
  white-space: nowrap;
}
.search-i { width: 20px; height: 20px; margin-right: 15px; flex: none; }
.task { width: 61.500px; height: 50px; flex: none; display: flex; align-items: center; justify-content: center; position: relative; }
.task-cortana { width: 59px; }
.task-view { width: 62px; margin-right: 2px; }
.task-mail { margin-left: 3px; }
.task-on { background: #5a5c50; border-bottom: 3px solid #76b9ed; }
.task-run::after { content: ""; position: absolute; left: 6px; right: 4px; bottom: 0; height: 3px; background: #76b9ed; }
.teams-t { font: bold 12px "Open Sans", sans-serif; fill: #fff; text-anchor: middle; }
.tray { margin-left: auto; display: flex; align-items: center; padding-right: 30px; gap: 9px; }
.tr { width: 21px; height: 21px; flex: none; }
.clock { text-align: center; font-size: 14px; line-height: 23.500px; margin: 0 14px 0 6px; color: #eee; white-space: nowrap; }
.notif { width: 21px; height: 21px; flex: none; }
```
